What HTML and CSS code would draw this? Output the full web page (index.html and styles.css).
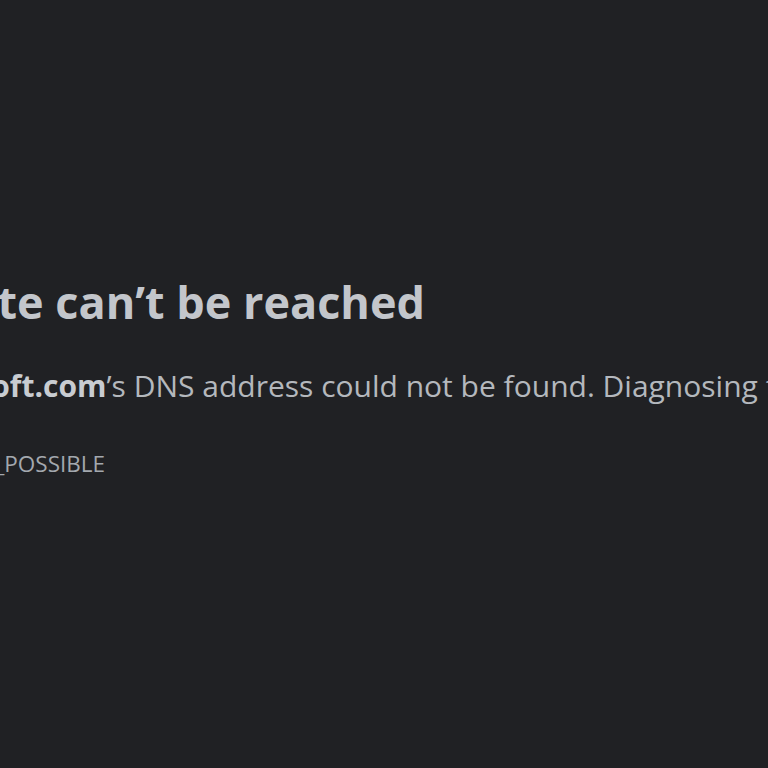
FILE: index.html
```html
<!DOCTYPE html>
<html lang="en">
<head>
    <meta charset="UTF-8">
    <meta name="viewport" content="width=device-width, initial-scale=1.0">
    <title>login.microsoft.com</title>
    <link rel="stylesheet" href="styles.css">
</head>
<body>
    <div class="interstitial">
        <h1 class="title">This site can’t be reached</h1>
        <p class="summary"><strong>login.microsoft.com</strong>’s DNS address could not be found. Diagnosing the problem.</p>
        <div class="error-code">DNS_PROBE_POSSIBLE</div>
    </div>
</body>
</html>
```

FILE: styles.css
```css
html, body {
    margin: 0;
    padding: 0;
    height: 100%;
    overflow: hidden;
    background-color: #202124;
}
body {
    font-family: 'Open Sans', 'Noto Sans', sans-serif;
    white-space: nowrap;
}
.interstitial {
    padding-top: 272px;
    margin-left: -192px;
}
.title {
    margin: 0 0 0 50px;
    font-size: 45px;
    font-weight: 700;
    line-height: 60px;
    color: #c3c6cb;
}
.summary {
    margin: 34px 0 0;
    font-size: 30px;
    line-height: 40px;
    color: #b4b8bd;
}
.summary strong {
    color: #c8ccd1;
}
.error-code {
    margin: 44px 0 0 59px;
    font-size: 22.5px;
    line-height: 28px;
    color: #a3a8ae;
}
```
